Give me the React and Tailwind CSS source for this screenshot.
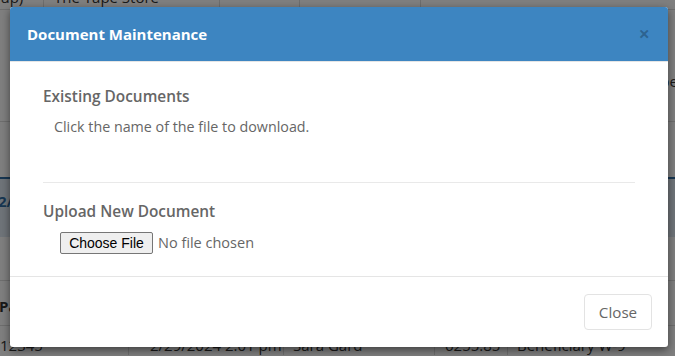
export default function App() {
  return (
    <div className="relative w-[675px] h-[356px] overflow-hidden bg-white font-['Open_Sans',sans-serif] text-[15px] text-[#333]">
      {/* page behind the dialog */}
      <div className="flex flex-col">
        <div className="flex h-[22px] -mt-[12px] border-b border-[#ddd] leading-[18px]">
          <div className="w-[74px] border-r border-[#ddd] -ml-[30px]">(Group)</div>
          <div className="w-[176px] border-r border-[#ddd] pl-[10px]">The Tape Store</div>
          <div className="w-[80px] border-r border-[#ddd]"></div>
          <div className="w-[121px] border-r border-[#ddd]"></div>
          <div className="flex-1"></div>
        </div>
        <div className="h-[112px] border-b border-[#ddd] flex items-center justify-end">
          <span className="mr-[-12px] mt-[32px]">Open</span>
        </div>
        <div className="h-[55px]"></div>
        <div className="h-[60px] border-t-2 border-[#2e6da4] bg-[#dfe9f2] flex items-center">
          <span className="font-bold text-[#2e6da4] -ml-[2px] -mt-[14px]">2/29</span>
        </div>
        <div className="h-[44px] border-b border-[#ddd]"></div>
        <div className="flex h-[45px] items-center border-b border-[#ddd]">
          <span className="font-bold -ml-[1px] mt-[6px]">Payee</span>
        </div>
        <div className="flex h-[30px] items-start leading-[20px]">
          <div className="w-[129px] border-r border-[#ddd] pt-[9px]">12345</div>
          <div className="w-[155px] border-r border-[#ddd] pt-[9px] pl-[21px]">2/29/2024 2:01 pm</div>
          <div className="w-[151px] border-r border-[#ddd] pt-[9px] pl-[9px]">Sara Gard</div>
          <div className="w-[73px] border-r border-[#ddd] pt-[9px] pl-[10px]">6255.85</div>
          <div className="flex-1 pt-[9px] pl-[9px]">Beneficiary W-9</div>
        </div>
      </div>

      {/* backdrop */}
      <div className="absolute inset-0 bg-black/50"></div>

      {/* dialog */}
      <div className="absolute left-[10px] top-[7px] w-[658px] bg-white rounded-[3px] shadow-[0_3px_9px_rgba(0,0,0,0.5)] overflow-hidden">
        <div className="h-[55px] bg-[#3d85c1] px-[17px] flex items-center justify-between border-b border-[#e5e5e5]">
          <h4 className="text-white font-bold text-[15px]">Document Maintenance</h4>
          <button className="text-black/25 font-bold text-[20px] leading-none mr-[1px] mt-[-1px]">×</button>
        </div>
        <div className="px-[33px] pt-[25px] pb-[22px]">
          <h5 className="text-[15.4px] font-semibold text-[#666] leading-[20px]">Existing Documents</h5>
          <p className="mt-[10px] ml-[11px] text-[14.3px] text-[#666] leading-[20px]">Click the name of the file to download.</p>
          <hr className="mt-[45px] border-t border-[#e9e9e9]" />
          <h5 className="mt-[19px] text-[15.4px] font-semibold text-[#666] leading-[20px]">Upload New Document</h5>
          <div className="mt-[10px] ml-[17px] flex items-center">
            <button className="h-[22px] w-[93px] border border-[#767676] bg-[#efefef] rounded-[2px] font-['Liberation_Sans',Arial,sans-serif] text-[14px] text-black">Choose File</button>
            <span className="ml-[5px] text-[14.5px] text-[#666]">No file chosen</span>
          </div>
        </div>
        <div className="border-t border-[#e5e5e5] pt-[17px] pb-[17px] pr-[16px] flex justify-end">
          <button className="h-[36px] w-[68px] border border-[#e3e3e3] rounded-[4px] bg-white text-[15.2px] text-[#666]">Close</button>
        </div>
      </div>
    </div>
  );
}
